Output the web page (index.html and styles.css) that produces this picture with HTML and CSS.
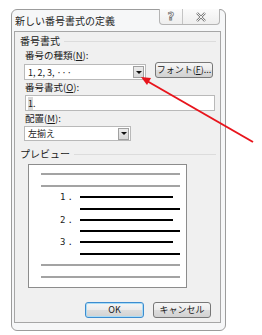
FILE: index.html
```html
<!DOCTYPE html>
<html lang="ja">
<head>
<meta charset="utf-8">
<link rel="stylesheet" href="styles.css">
</head>
<body>
<div class="dialog">
  <div class="titlebar">
    <span class="title">新しい番号書式の定義</span>
    <div class="caption-btns">
      <span class="cap help">?</span>
      <span class="cap close">
        <svg width="12" height="10" viewBox="0 0 12 10"><path d="M2 1 L10 9 M10 1 L2 9" stroke="#7a7a7a" stroke-width="2.4" fill="none"/><path d="M2 1 L10 9 M10 1 L2 9" stroke="#ffffff" stroke-width="0.9" fill="none"/></svg>
      </span>
    </div>
  </div>
  <div class="client">
    <div class="group-title"><span>番号書式</span><i class="rule"></i></div>
    <div class="label">番号の種類(<u>N</u>):</div>
    <div class="row1">
      <div class="combo combo-wide"><span>1, 2, 3, ···</span><span class="drop"><i></i></span></div>
      <div class="btn font-btn">フォント(<u>F</u>)...</div>
    </div>
    <div class="label">番号書式(<u>O</u>):</div>
    <div class="input"><span class="sel">1</span>.</div>
    <div class="label">配置(<u>M</u>):</div>
    <div class="combo combo-small"><span>左揃え</span><span class="drop"><i></i></span></div>
    <div class="group-title preview-title"><span>プレビュー</span><i class="rule"></i></div>
    <div class="preview">
      <div class="ln gray first"></div>
      <div class="ln gray m10"></div>
      <div class="item m9"><span class="num">1.</span><div class="ln black short"></div></div>
      <div class="ln black long m10"></div>
      <div class="item m9"><span class="num">2.</span><div class="ln black short"></div></div>
      <div class="ln black long m9"></div>
      <div class="item m9"><span class="num">3.</span><div class="ln black short"></div></div>
      <div class="ln black long m10"></div>
      <div class="ln gray m9"></div>
      <div class="ln gray m10"></div>
    </div>
    <div class="buttons">
      <div class="btn ok">OK</div>
      <div class="btn">キャンセル</div>
    </div>
  </div>
</div>
<svg class="arrow" width="262" height="335" viewBox="0 0 262 335">
  <line x1="253" y1="142" x2="147" y2="81" stroke="#e8141c" stroke-width="2"/>
  <polygon points="141,77 151,78 147,85" fill="#e8141c"/>
</svg>
</body>
</html>
```

FILE: styles.css
```css
html, body {
  margin: 0;
  padding: 0;
}
body {
  width: 262px;
  height: 335px;
  background: #ffffff;
  position: relative;
  overflow: hidden;
  font-family: "Noto Sans CJK JP", "Noto Sans", sans-serif;
  color: #1a1a1a;
}
.dialog {
  box-sizing: border-box;
  margin: 9px 0 0 11px;
  width: 215px;
  height: 322px;
  border: 1px solid #9c9c9c;
  border-radius: 6px;
  background: #f6f7f8;
  padding: 0 4px 7px 2px;
  display: flex;
  flex-direction: column;
}
.titlebar {
  height: 21px;
  display: flex;
  justify-content: space-between;
  align-items: flex-start;
  flex: none;
}
.title {
  font-size: 10px;
  line-height: 14px;
  margin-top: 4px;
  padding-left: 1px;
  color: #1e1e1e;
}
.caption-btns {
  display: flex;
  margin-top: -1px;
  margin-right: 1px;
  height: 16px;
  border: 1px solid #b4b4b4;
  border-top: none;
  border-radius: 0 0 4px 4px;
  background: linear-gradient(#fbfbfb, #eeeeee);
  box-sizing: border-box;
}
.cap {
  display: flex;
  align-items: center;
  justify-content: center;
  height: 15px;
}
.help {
  width: 22px;
  border-right: 1px solid #c4c4c4;
  font-family: "DejaVu Sans", sans-serif;
  font-size: 11px;
  font-weight: bold;
  color: #ffffff;
  -webkit-text-stroke: 0.8px #777777;
}
.close {
  width: 36px;
}
.client {
  flex: 1;
  border: 1px solid #a6a6a6;
  background: #f0f0f0;
  padding: 0 4px 0 5px;
  display: flex;
  flex-direction: column;
  font-size: 9px;
}
.group-title {
  margin-top: 2px;
  height: 14px;
  line-height: 14px;
  display: flex;
  align-items: center;
  font-size: 10px;
}
.group-title .rule {
  flex: 1;
  height: 1px;
  background: #dcdcdc;
  margin-left: 4px;
  margin-top: 1px;
}
.label {
  height: 14px;
  line-height: 14px;
  padding-left: 5px;
  font-size: 9.5px;
}
.label:first-of-type {
  height: 13px;
}
.row1 {
  display: flex;
  align-items: flex-start;
  height: 18px;
}
.combo {
  box-sizing: border-box;
  height: 16px;
  border: 1px solid #b9b9b9;
  background: #ffffff;
  display: flex;
  align-items: center;
  justify-content: space-between;
  padding-left: 3px;
  margin-left: 4px;
  font-size: 9px;
}
.combo-wide {
  width: 122px;
  margin-top: 2px;
}
.combo-small {
  width: 107px;
  margin-top: 1px;
  height: 15px;
}
.drop {
  width: 11px;
  height: 12px;
  margin-right: 1px;
  border: 1px solid #a0a0a0;
  background: linear-gradient(#ececec, #d8d8d8);
  display: flex;
  align-items: center;
  justify-content: center;
  box-sizing: border-box;
}
.drop i {
  width: 0;
  height: 0;
  border-left: 3px solid transparent;
  border-right: 3px solid transparent;
  border-top: 3px solid #111111;
}
.btn {
  box-sizing: border-box;
  width: 58px;
  height: 16px;
  border: 1px solid #777777;
  border-radius: 3px;
  background: linear-gradient(#f6f6f6 0%, #ebebeb 50%, #dddddd 51%, #d2d2d2 100%);
  display: flex;
  align-items: center;
  justify-content: center;
  font-size: 9px;
  line-height: 12px;
  color: #1a1a1a;
}
.font-btn {
  margin-left: 9px;
}
.input {
  box-sizing: border-box;
  margin-top: 1px;
  margin-left: 5px;
  width: 190px;
  height: 16px;
  border: 1px solid #b9b9b9;
  background: #ffffff;
  display: flex;
  align-items: center;
  padding-left: 2px;
  font-size: 9px;
}
.sel {
  background: #d8d8d8;
}
.preview-title {
  margin-top: 6px;
}
.preview {
  box-sizing: border-box;
  margin-top: 3px;
  margin-left: 8px;
  width: 159px;
  height: 124px;
  border: 1px solid #8c8c8c;
  background: #ffffff;
  padding: 8px 6px 0 12px;
  display: flex;
  flex-direction: column;
}
.ln {
  height: 2px;
  flex: none;
}
.gray {
  background: #a3a3a3;
}
.black {
  background: #000000;
}
.m9 { margin-top: 9px; }
.m10 { margin-top: 10px; }
.long {
  margin-left: 39px;
}
.item {
  height: 2px;
  display: flex;
  align-items: center;
  flex: none;
}
.num {
  width: 39px;
  box-sizing: border-box;
  padding-left: 19px;
  font-family: "DejaVu Sans Mono", monospace;
  font-size: 9px;
  line-height: 12px;
  letter-spacing: 2px;
}
.short {
  width: 93px;
}
.buttons {
  display: flex;
  justify-content: flex-end;
  gap: 9px;
  margin-top: 14px;
  padding-right: 5px;
}
.ok {
  width: 59px;
  border-color: #3c8ccf;
  box-shadow: inset 0 0 0 1px #a9dcf6;
}
.arrow {
  position: absolute;
  left: 0;
  top: 0;
  pointer-events: none;
}
```
